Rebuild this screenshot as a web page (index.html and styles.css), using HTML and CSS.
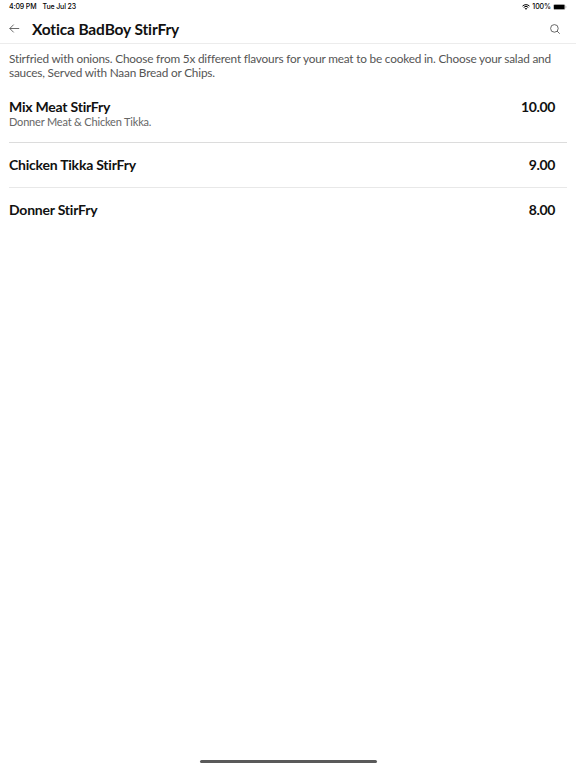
FILE: index.html
```html
<!DOCTYPE html>
<html lang="en">
<head>
    <meta charset="utf-8">
    <title>Xotica BadBoy StirFry</title>
    <link rel="stylesheet" href="styles.css">
</head>
<body>
    <!-- Status bar -->
    <div class="status-bar">
        <span class="time">4:09 PM</span>
        <span class="date">Tue Jul 23</span>
        <div class="status-right">
            <svg class="wifi" viewBox="0 0 16 12">
                <path d="M1 4.2a10 10 0 0 1 14 0M3.4 6.8a6.5 6.5 0 0 1 9.2 0" fill="none" stroke="#000" stroke-width="2"/>
                <path d="M5.4 9a3.8 3.8 0 0 1 5.2 0L8 11.7z"/>
            </svg>
            <span class="percent">100%</span>
            <svg class="battery" viewBox="0 0 27 12">
                <rect x=".5" y=".5" width="23" height="11" rx="3" fill="none" stroke="#999"/>
                <rect x="1.4" y="1.4" width="21.2" height="9.2" rx="1.8"/>
                <path d="M25 4v4a2.2 2.2 0 0 0 0-4z" fill="#888"/>
            </svg>
        </div>
    </div>

    <!-- Header -->
    <header class="header">
        <svg class="back" viewBox="0 0 11 9">
            <path d="M10.2 4.5H.8M4.7.6L.8 4.5l3.9 3.9"/>
        </svg>
        <h1>Xotica BadBoy StirFry</h1>
        <svg class="search" viewBox="0 0 10 10">
            <circle cx="4.4" cy="4.4" r="3.8"/>
            <path d="M7.1 7.1l2.6 2.6"/>
        </svg>
    </header>

    <!-- Menu items -->
    <main class="menu">
        <p class="intro">Stirfried with onions. Choose from 5x different flavours for your meat to be cooked in. Choose your salad and sauces, Served with Naan Bread or Chips.</p>
        <ul>
            <li class="item first">
                <div>
                    <h2>Mix Meat StirFry</h2>
                    <p class="details">Donner Meat &amp; Chicken Tikka.</p>
                </div>
                <span class="price">10.00</span>
            </li>
            <li class="item">
                <h2>Chicken Tikka StirFry</h2>
                <span class="price">9.00</span>
            </li>
            <li class="item">
                <h2>Donner StirFry</h2>
                <span class="price">8.00</span>
            </li>
        </ul>
    </main>

    <div class="home-bar"></div>
</body>
</html>
```

FILE: styles.css
```css
* {
    margin: 0;
    padding: 0;
    box-sizing: border-box;
    list-style: none;
}

body {
    display: flex;
    flex-direction: column;
    height: 768px;
    background: #fff;
    color: #111;
    font-family: Lato, sans-serif;
    font-variant-ligatures: none;
    overflow: hidden;
}

/* Status bar */
.status-bar {
    display: flex;
    align-items: center;
    height: 14px;
    padding: 0 9px;
    color: #000;
    font: 500 7px/14px Inter, sans-serif;
    letter-spacing: -.13px;
}

.date {
    margin-left: 6px;
}

.status-right {
    display: flex;
    align-items: center;
    gap: 2px;
    margin-left: auto;
}

.percent {
    letter-spacing: -.05px;
}

.wifi {
    width: 8px;
    height: 6px;
}

.battery {
    width: 14px;
    height: 6px;
}

/* Header */
.header {
    display: flex;
    align-items: center;
    height: 30px;
    padding: 0 16px 0 9px;
    border-bottom: 1px solid #ececec;
}

.header h1 {
    margin-left: 12px;
    font-size: 15.5px;
    line-height: 20px;
    letter-spacing: -.13px;
}

.back,
.search {
    fill: none;
    stroke: #444;
    stroke-width: .8;
}

.back {
    width: 11px;
    height: 9px;
}

.search {
    width: 10px;
    height: 10px;
    margin-left: auto;
}

/* Menu items */
.menu {
    padding: 8px 9px 0;
}

.intro {
    color: #555;
    font-size: 11.8px;
    line-height: 14px;
    letter-spacing: -.19px;
}

.item {
    display: flex;
    align-items: center;
    justify-content: space-between;
    height: 45px;
    padding: 0 12px 2px 0;
    border-bottom: 1px solid #e8e8e8;
}

.item.first {
    align-items: flex-start;
    height: 63px;
    padding-top: 18px;
    border-bottom-color: #dcdcdc;
}

.item:last-child {
    border-bottom: none;
}

.item h2,
.price {
    font-size: 14px;
    font-weight: 700;
    line-height: 17px;
    letter-spacing: -.22px;
}

.price {
    letter-spacing: -.35px;
}

.details {
    color: #666;
    font-size: 11px;
    line-height: 13px;
    letter-spacing: -.18px;
}

/* Home indicator */
.home-bar {
    width: 177px;
    height: 3px;
    margin: auto auto 5px;
    border-radius: 2px;
    background: #5a5a5a;
}
```
